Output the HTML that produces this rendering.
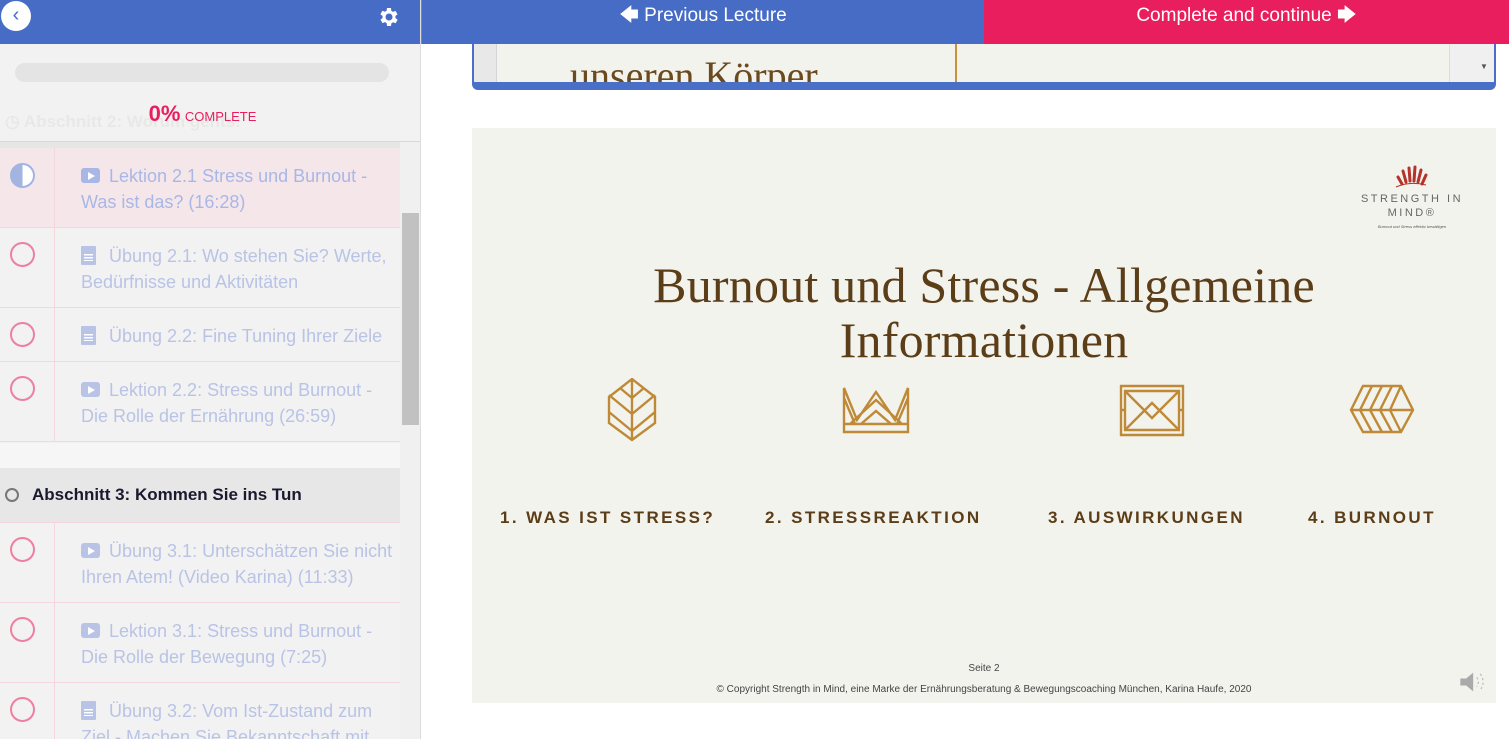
<!DOCTYPE html>
<html><head><meta charset="utf-8"><style>
*{margin:0;padding:0;box-sizing:border-box}
body{width:1509px;height:739px;overflow:hidden;background:#fff;font-family:"Liberation Sans",sans-serif;position:relative}
.abs{position:absolute}
.side{left:0;top:0;width:421px;height:739px;background:#f2f2f2;border-right:1px solid #ddd;overflow:hidden}
.row{position:absolute;left:0;width:400px;border-bottom:1px solid #f3d6de}
.row .col{position:absolute;left:0;top:0;bottom:0;width:55px;border-right:1px solid #f3d6de}
.circ{position:absolute;left:10px;top:14px;width:25px;height:25px;border:2.5px solid #ef7fa0;border-radius:50%}
.txt{position:absolute;left:81px;top:15px;width:318px;font-size:18px;line-height:26px;color:#b9c3e6}
.ic{display:inline-block;width:19px;height:15px;background:#b9c3e6;border-radius:3px;vertical-align:-1px;margin-right:9px;position:relative}
.ic.v:after{content:"";position:absolute;left:7px;top:3.5px;border-left:7px solid #fff;border-top:4px solid transparent;border-bottom:4px solid transparent}
.ic.d{width:15px;height:19px;border-radius:1px;vertical-align:-3px;margin-right:13px}
.ic.d:after{content:"";position:absolute;left:3px;top:8px;width:9px;height:7px;background:repeating-linear-gradient(#fff 0 1.5px,transparent 1.5px 3px)}
.cap{font-family:"Liberation Sans",sans-serif;font-weight:bold;letter-spacing:2.4px;font-size:17px;color:#5b3d17}
</style></head><body>
<div class="abs side">
  <div class="abs" style="left:0;top:142px;width:400px;height:6px;background:#e6e6e6"></div>
  <div class="row" style="top:148px;height:80px;background:#f5e6ea"><div class="col"></div>
    <div class="abs" style="left:10px;top:15px;width:25px;height:25px;border-radius:50%;background:linear-gradient(90deg,#a3b3e2 50%,#fff 50%);border:2.5px solid #a3b3e2"></div>
    <div class="txt" style="color:#a9b7e6"><span class="ic v" style="background:#a9b7e6"></span>Lektion 2.1 Stress und Burnout - Was ist das? (16:28)</div></div>
  <div class="row" style="top:228px;height:80px"><div class="col"></div><div class="circ"></div>
    <div class="txt"><span class="ic d"></span>Übung 2.1: Wo stehen Sie? Werte, Bedürfnisse und Aktivitäten</div></div>
  <div class="row" style="top:308px;height:54px"><div class="col"></div><div class="circ"></div>
    <div class="txt"><span class="ic d"></span>Übung 2.2: Fine Tuning Ihrer Ziele</div></div>
  <div class="row" style="top:362px;height:80px"><div class="col"></div><div class="circ"></div>
    <div class="txt"><span class="ic v"></span>Lektion 2.2: Stress und Burnout - Die Rolle der Ernährung (26:59)</div></div>
  <div class="abs" style="left:0;top:443px;width:400px;height:25px;background:#f6f6f6"></div>
  <div class="row" style="top:468px;height:55px;background:#e7e7e7">
    <div class="abs" style="left:5px;top:20px;width:14px;height:14px;border:2px solid #777;border-radius:50%"></div>
    <div class="abs" style="left:32px;top:17px;font-size:17px;font-weight:bold;color:#1a1a2e">Abschnitt 3: Kommen Sie ins Tun</div></div>
  <div class="row" style="top:523px;height:80px"><div class="col"></div><div class="circ"></div>
    <div class="txt"><span class="ic v"></span>Übung 3.1: Unterschätzen Sie nicht Ihren Atem! (Video Karina) (11:33)</div></div>
  <div class="row" style="top:603px;height:80px"><div class="col"></div><div class="circ"></div>
    <div class="txt"><span class="ic v"></span>Lektion 3.1: Stress und Burnout - Die Rolle der Bewegung (7:25)</div></div>
  <div class="row" style="top:683px;height:80px"><div class="col"></div><div class="circ"></div>
    <div class="txt"><span class="ic d"></span>Übung 3.2: Vom Ist-Zustand zum Ziel - Machen Sie Bekanntschaft mit</div></div>
  <div class="abs" style="left:400px;top:142px;width:20px;height:597px;background:#f0f0f0"></div>
  <div class="abs" style="left:402px;top:213px;width:17px;height:212px;background:#c1c1c1"></div>
  <div class="abs" style="left:0;top:44px;width:420px;height:98px;background:#f2f2f2;border-bottom:1px solid #d8d8d8">
    <div class="abs" style="left:5px;top:68px;font-size:17px;font-weight:bold;color:#e8e8e8">◷ Abschnitt 2: Worum gehts:</div>
    <div class="abs" style="left:15px;top:19px;width:374px;height:19px;background:#e4e4e4;border-radius:10px"></div>
    <div class="abs" style="left:0;top:57px;width:405px;text-align:center;color:#e91e5e"><span style="font-size:22px;font-weight:bold">0%</span> <span style="font-size:13px">COMPLETE</span></div>
  </div>
  <div class="abs" style="left:0;top:0;width:421px;height:44px;background:#476cc6">
    <div class="abs" style="left:1px;top:1px;width:30px;height:30px;border-radius:50%;background:#fff;color:#476cc6;font-size:20px;line-height:28px;text-align:center">‹</div>
    <svg class="abs" style="left:377px;top:5px" width="24" height="24" viewBox="0 0 24 24"><path fill="#fff" d="M19.4 13a7.5 7.5 0 0 0 0-2l2.1-1.6-2-3.5-2.5 1a7 7 0 0 0-1.7-1L15 3h-4l-.4 2.7a7 7 0 0 0-1.7 1l-2.5-1-2 3.5L6.6 11a7.5 7.5 0 0 0 0 2l-2.1 1.6 2 3.5 2.5-1a7 7 0 0 0 1.7 1L11 21h4l.4-2.7a7 7 0 0 0 1.7-1l2.5 1 2-3.5zM13 15.5a3.5 3.5 0 1 1 0-7 3.5 3.5 0 0 1 0 7z" transform="translate(-1 0)"/></svg>
  </div>
</div>
<div class="abs" style="left:421px;top:0;width:563px;height:44px;background:#476cc6;color:#fff;font-size:19px;text-align:center;line-height:32px;border-left:1px solid #6a86d0">🡄 Previous Lecture</div>
<div class="abs" style="left:984px;top:0;width:525px;height:44px;background:#e91e5e;color:#fff;font-size:19px;text-align:center;line-height:32px">Complete and continue 🡆</div>
<div class="abs" style="left:472px;top:44px;width:1024px;height:46px;background:#4a6fc7;border-radius:0 0 6px 6px"></div>
<div class="abs" style="left:474px;top:44px;width:1020px;height:38px;background:#f3f3ee;overflow:hidden">
  <div class="abs" style="left:0;top:0;width:23px;height:38px;background:#e8e8e8;border-right:1px solid #d5d5d5"></div>
  <div class="abs" style="left:96px;top:8px;font-family:'Liberation Serif',serif;font-size:40px;color:#6b4a1e;white-space:nowrap">unseren Körper</div>
  <div class="abs" style="left:481px;top:0;width:2px;height:38px;background:#c8923c"></div>
  <div class="abs" style="left:975px;top:0;width:45px;height:38px;background:#f0f0f0;border-left:1px solid #ddd"><span class="abs" style="left:30px;top:18px;font-size:8px;color:#555">▼</span></div>
</div>
<div class="abs" style="left:472px;top:128px;width:1024px;height:575px;background:#f3f3ee">
  <svg class="abs" style="left:922px;top:36px" width="36" height="26" viewBox="0 0 36 26"><g stroke="#b5332a" stroke-width="3" stroke-linecap="round"><path d="M8 20l-4-7M12 18l-3-11M16 17l-1-13M20 17l1-14M24 18l3-12M28 20l4-9"/></g><path d="M2 23q14-6 30-2" stroke="#b5332a" fill="none"/></svg>
  <div class="abs" style="left:880px;top:64px;width:120px;text-align:center;font-size:11px;letter-spacing:2.5px;color:#666;line-height:14px">STRENGTH IN<br>MIND®</div>
  <div class="abs" style="left:900px;top:96px;width:80px;text-align:center;font-size:4px;color:#555;font-style:italic">Burnout und Stress effektiv bewältigen</div>
  <div class="abs" style="left:0;top:130px;width:1024px;text-align:center;font-family:'Liberation Serif',serif;font-size:50px;line-height:55px;color:#5b3d17;letter-spacing:0.2px">Burnout und Stress - Allgemeine<br>Informationen</div>
  <svg class="abs" style="left:0;top:250px" width="1024" height="70" viewBox="0 0 1024 70" fill="none" stroke="#bf8a37" stroke-width="2.4">
    <g transform="translate(160,0)"><path d="M0 1L23 19V45L0 62L-23 45V19Z M0 1V62 M-23 17L0 36L23 17 M-23 34L0 53L23 34 M-12 10L0 20L12 10"/></g>
    <g transform="translate(404,0)"><path d="M-32 10V54H32V10L19 42L0 14L-19 42Z M-32 46H32 M-26 46L0 22L26 46 M-15 46L0 33L15 46 M-32 20L-21 46 M32 20L21 46"/></g>
    <g transform="translate(680,0)"><path d="M-31 8H31V57H-31Z M-27 13H27V52H-27Z M-27 13L0 40L27 13 M-27 52L0 25L27 52 M-31 32H-27 M27 32H31"/></g>
    <g transform="translate(910,0)"><path d="M-19 8H19L31 32L19 54H-19L-31 32Z M-31 32H31 M-10 8L-22 32L-10 54 M0 8L-12 32L0 54 M10 8L-2 32L10 54 M19 8L8 32L19 54"/></g>
  </svg>
  <div class="abs cap" style="left:28px;top:380px">1. WAS IST STRESS?</div>
  <div class="abs cap" style="left:293px;top:380px">2. STRESSREAKTION</div>
  <div class="abs cap" style="left:576px;top:380px">3. AUSWIRKUNGEN</div>
  <div class="abs cap" style="left:836px;top:380px">4. BURNOUT</div>
  <div class="abs" style="left:0;top:535px;width:1024px;text-align:center;font-size:10px;color:#444">Seite 2</div>
  <div class="abs" style="left:0;top:556px;width:1024px;text-align:center;font-size:10px;color:#444">© Copyright Strength in Mind, eine Marke der Ernährungsberatung &amp; Bewegungscoaching München, Karina Haufe, 2020</div>
  <svg class="abs" style="left:986px;top:540px" width="28" height="28" viewBox="0 0 24 24"><path d="M2 9h5l6-5v16l-6-5H2z" fill="#aaa"/><path d="M16 8q3 4 0 8M19 5q5 7 0 14" stroke="#bbb" fill="none" stroke-dasharray="2 2"/></svg>
</div>
</body></html>
